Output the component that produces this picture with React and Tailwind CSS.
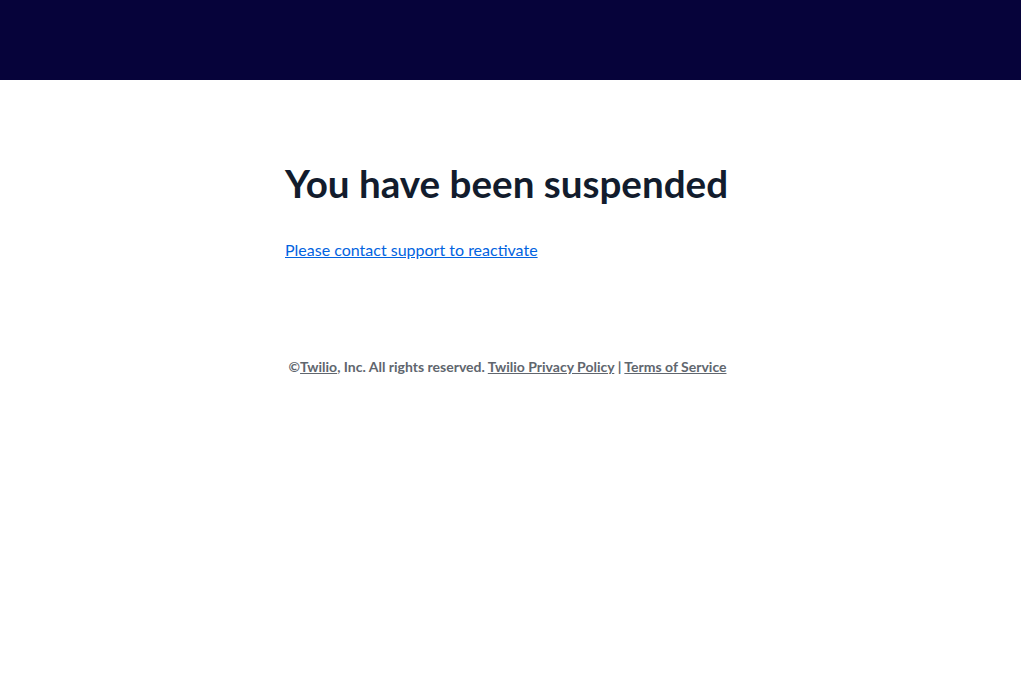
import React from "react";

const App = () => {
  return (
    <div className="min-h-screen bg-white font-['Lato',sans-serif]">
      {/* HEADER */}
      <header className="h-20 w-full bg-[#06033a]" />

      {/* MAIN */}
      <main className="mx-auto w-[451px] pt-[79px]">
        <h1 className="whitespace-nowrap text-[38.6px] font-bold leading-[48px] text-[#121c2d]">
          You have been suspended
        </h1>
        <a href="#" className="mt-[31px] block text-[16px] leading-6 text-[#0263e0] underline">
          Please contact support to reactivate
        </a>

        {/* FOOTER */}
        <p className="mt-[95px] whitespace-nowrap pr-[6px] text-center text-[14px] font-bold leading-5 text-[#60666e]">
          ©<a href="#" className="underline">Twilio</a>, Inc. All rights reserved.{" "}
          <a href="#" className="underline">Twilio Privacy Policy</a> |{" "}
          <a href="#" className="underline">Terms of Service</a>
        </p>
      </main>
    </div>
  );
};

export default App;
